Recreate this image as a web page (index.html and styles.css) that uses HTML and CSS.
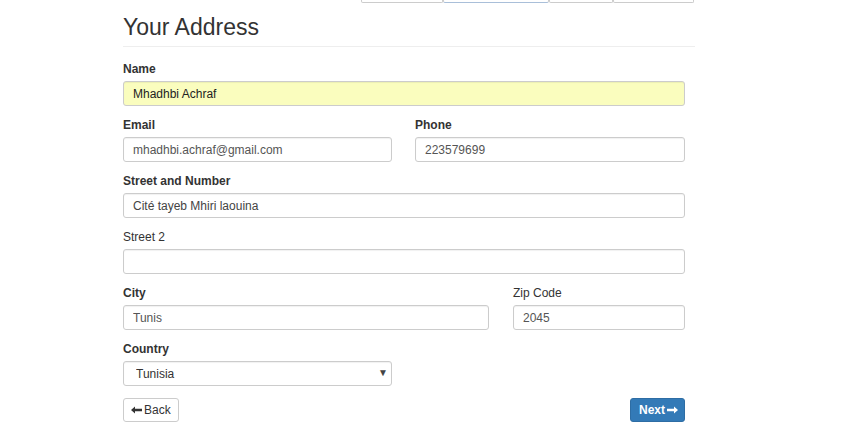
FILE: index.html
```html
<!DOCTYPE html>
<html lang="en">
<head>
<meta charset="utf-8">
<title>Your Address</title>
<link rel="stylesheet" href="styles.css">
</head>
<body>
<div class="page">
  <div class="tabs">
    <span class="tab t1"></span>
    <span class="tab t2 active"></span>
    <span class="tab t3"></span>
    <span class="tab t4"></span>
  </div>
  <h2 class="title">Your Address</h2>
  <hr class="rule">
  <form class="form">
    <div class="group">
      <label class="label bold">Name</label>
      <input class="field autofill" type="text" value="Mhadhbi Achraf">
    </div>
    <div class="row half">
      <div class="group">
        <label class="label bold">Email</label>
        <input class="field" type="text" value="mhadhbi.achraf@gmail.com">
      </div>
      <div class="group">
        <label class="label bold">Phone</label>
        <input class="field" type="text" value="223579699">
      </div>
    </div>
    <div class="group">
      <label class="label bold">Street and Number</label>
      <input class="field dark" type="text" value="Cité tayeb Mhiri laouina">
    </div>
    <div class="group">
      <label class="label">Street 2</label>
      <input class="field" type="text" value="">
    </div>
    <div class="row city">
      <div class="group">
        <label class="label bold">City</label>
        <input class="field" type="text" value="Tunis">
      </div>
      <div class="group">
        <label class="label">Zip Code</label>
        <input class="field" type="text" value="2045">
      </div>
    </div>
    <div class="row half">
      <div class="group last">
        <label class="label bold">Country</label>
        <div class="select-wrap">
          <select class="field select"><option>Tunisia</option></select>
          <span class="caret">▼</span>
        </div>
      </div>
    </div>
    <div class="actions">
      <button type="button" class="btn btn-default">
        <svg class="arrow" width="11" height="8" viewBox="0 0 11 8"><path d="M0 4 L4 0.5 L4 2.8 L11 2.8 L11 5.2 L4 5.2 L4 7.5 Z" fill="#333"/></svg>Back
      </button>
      <button type="button" class="btn btn-primary">
        Next<svg class="arrow right" width="11" height="8" viewBox="0 0 11 8"><path d="M11 4 L7 0.5 L7 2.8 L0 2.8 L0 5.2 L7 5.2 L7 7.5 Z" fill="#fff"/></svg>
      </button>
    </div>
  </form>
</div>
</body>
</html>
```
FILE: styles.css
```css
* { box-sizing: border-box; }
html, body { margin: 0; padding: 0; background: #fff; }
body {
  font-family: "Liberation Sans", Arial, Helvetica, sans-serif;
  font-size: 12px;
  color: #333;
}
.page {
  width: 572px;
  margin-left: 123px;
}
.tabs {
  display: flex;
  height: 3px;
  margin-left: 238px;
  width: 333px;
}
.tab {
  height: 3px;
  border: 1px solid #ccc;
  border-top: none;
  border-radius: 0 0 2px 2px;
}
.tab.active { border-bottom-color: #a9bfd9; }
.t1 { width: 82px; }
.t2 { width: 106px; }
.t3 { width: 64px; }
.t4 { width: 81px; }
.title {
  margin: 11px 0 0 0;
  font-size: 23px;
  font-weight: 400;
  line-height: 26px;
  color: #333;
}
.rule {
  margin: 6px 0 14px 0;
  border: 0;
  border-top: 1px solid #eee;
  height: 0;
}
.form { width: 562px; }
.group { margin-bottom: 11px; }
.group.last { margin-bottom: 12px; }
.label {
  display: block;
  font-size: 12px;
  line-height: 17px;
  margin-bottom: 3px;
  font-weight: 400;
  color: #333;
}
.label.bold { font-weight: 700; }
.field {
  display: block;
  width: 100%;
  height: 25px;
  padding: 0 9px;
  font-family: "Liberation Sans", Arial, Helvetica, sans-serif;
  font-size: 12px;
  color: #555;
  background: #fff;
  border: 1px solid #ccc;
  border-radius: 3px;
  box-shadow: inset 0 1px 1px rgba(0,0,0,0.06);
  outline: none;
}
.field.autofill { background: #fafdbe; color: #222; }
.field.dark { color: #444; }
.row { display: grid; }
.row.half { grid-template-columns: 269px 1fr; column-gap: 23px; }
.row.city { grid-template-columns: 366px 1fr; column-gap: 24px; }
.select-wrap { position: relative; }
.select {
  appearance: none;
  -webkit-appearance: none;
  padding-left: 12px;
  color: #333;
}
.caret {
  position: absolute;
  right: 4px;
  top: 6px;
  font-size: 10px;
  color: #444;
  pointer-events: none;
}
.actions {
  display: flex;
  justify-content: space-between;
}
.btn {
  display: inline-flex;
  align-items: center;
  height: 24px;
  padding: 0 7px;
  font-family: "Liberation Sans", Arial, Helvetica, sans-serif;
  font-size: 12px;
  border-radius: 3px;
  border: 1px solid #ccc;
  cursor: pointer;
}
.btn-default { background: #fff; color: #333; }
.btn-primary {
  background: #337ab7;
  border-color: #2e6da4;
  color: #fff;
  font-weight: 700;
  padding: 0 6px 0 8px;
}
.arrow { margin-right: 2px; }
.arrow.right { margin-left: 2px; margin-right: 0; }
```
